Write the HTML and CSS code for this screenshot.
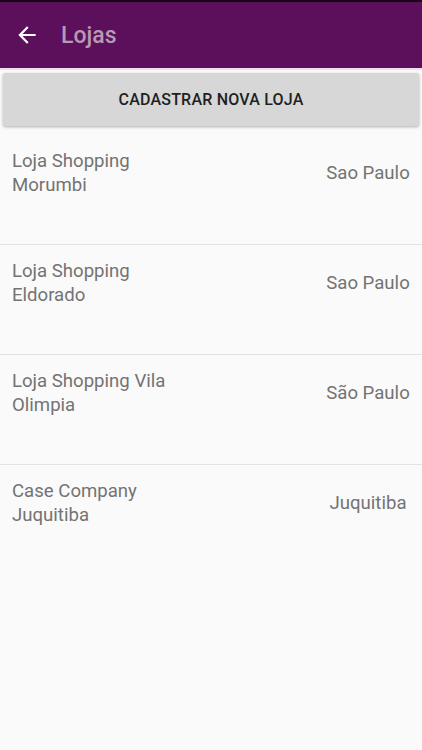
FILE: index.html
```html
<!DOCTYPE html>
<html>
<head>
    <title>Lojas</title>
    <link rel="stylesheet" href="styles.css">
</head>
<body>
    <div class="statusbar"></div>
    <div class="appbar">
        <svg class="back" width="26" height="26" viewBox="0 0 24 24">
            <path d="M20 11H7.83l5.59-5.59L12 4l-8 8 8 8 1.41-1.41L7.83 13H20v-2z" fill="#ffffff"/>
        </svg>
        <span class="title">Lojas</span>
    </div>
    <div class="actions">
        <button class="add-btn">CADASTRAR NOVA LOJA</button>
    </div>
    <ul class="stores">
        <li class="store">
            <div class="name">Loja Shopping Morumbi</div>
            <div class="city">Sao Paulo</div>
        </li>
        <li class="store">
            <div class="name">Loja Shopping Eldorado</div>
            <div class="city">Sao Paulo</div>
        </li>
        <li class="store">
            <div class="name">Loja Shopping Vila Olimpia</div>
            <div class="city">São Paulo</div>
        </li>
        <li class="store">
            <div class="name">Case Company Juquitiba</div>
            <div class="city">Juquitiba</div>
        </li>
    </ul>
</body>
</html>
```

FILE: styles.css
```css
body {
    margin: 0;
    font-family: Roboto, "Noto Sans", sans-serif;
    background-color: #fafafa;
    height: 750px;
}

.statusbar {
    height: 2px;
    background-color: #1a0419;
}

.appbar {
    height: 66px;
    background-color: #5c0f5a;
    display: flex;
    align-items: center;
    padding-left: 14px;
}

.back {
    width: 26px;
    height: 26px;
}

.title {
    margin-left: 21px;
    font-size: 23px;
    font-weight: 500;
    color: #b799b5;
}

.actions {
    padding: 3px 3px 0 3px;
    border-top: 2px solid #f3dcef;
}

.add-btn {
    width: 100%;
    height: 53px;
    border: none;
    border-radius: 2px;
    background-color: #d7d7d7;
    box-shadow: 0 1px 3px rgba(0, 0, 0, 0.3);
    font-family: Roboto, sans-serif;
    font-size: 16px;
    font-weight: 500;
    color: #1f1f1f;
    letter-spacing: 0.2px;
}

.stores {
    list-style: none;
    margin: 9px 0 0 0;
    padding: 0;
}

.store {
    height: 109px;
    display: flex;
    justify-content: space-between;
    align-items: flex-start;
    border-bottom: 1px solid #e3e3e3;
    font-size: 18.6px;
    line-height: 24px;
    color: #737373;
}

.store:last-child {
    border-bottom: none;
}

.name {
    width: 170px;
    padding: 14px 0 0 12px;
}

.city {
    width: 100px;
    padding: 26px 4px 0 0;
    text-align: center;
}
```
